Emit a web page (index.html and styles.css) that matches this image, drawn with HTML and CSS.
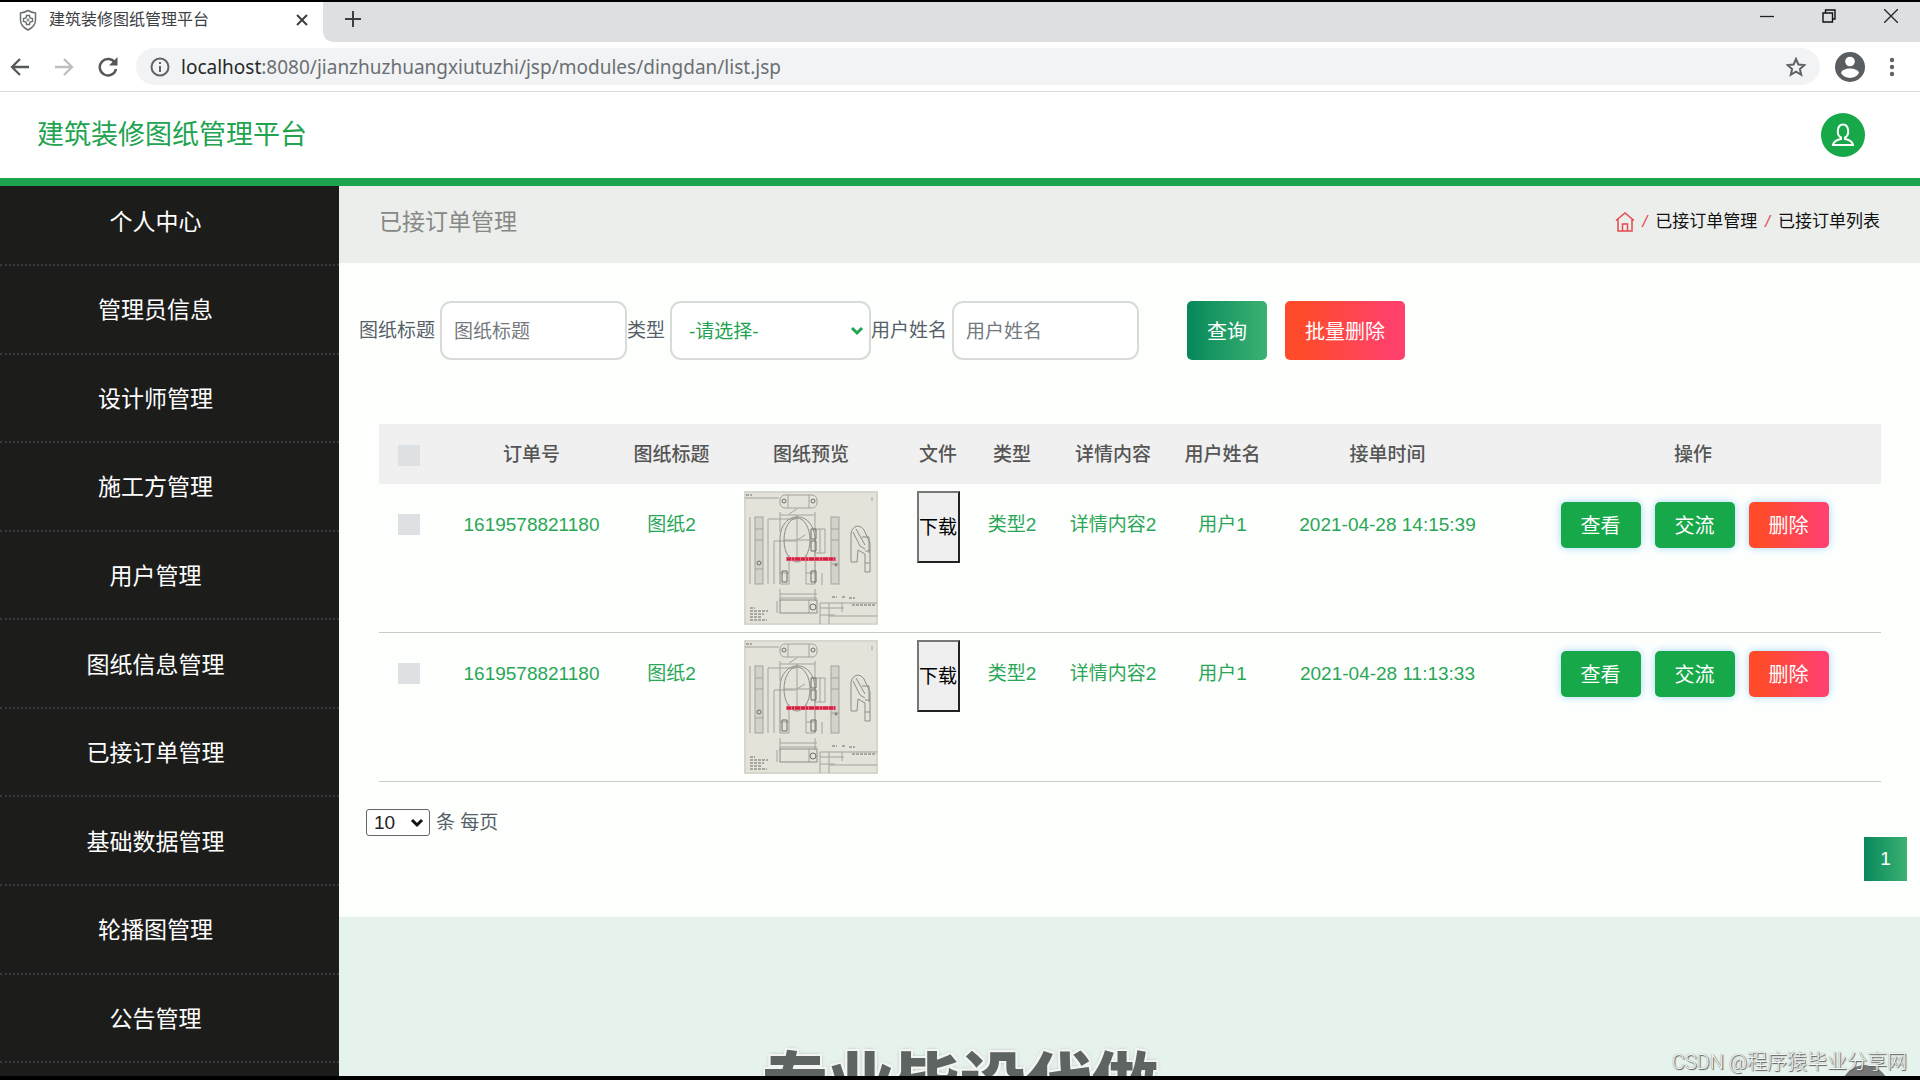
FILE: index.html
```html
<!DOCTYPE html>
<html lang="zh-CN">
<head>
    <meta charset="UTF-8">
    <meta name="viewport" content="width=device-width, initial-scale=1.0">
    <title>建筑装修图纸管理平台</title>
    <link rel="stylesheet" href="styles.css">
</head>
<body>
    <!-- shared drawing preview -->
    <svg class="defs" aria-hidden="true">
        <symbol id="drawing" viewBox="0 0 134 134">
            <rect width="134" height="134" fill="#e3e3da"/>
            <rect x="1" y="1" width="132" height="132" fill="none" stroke="#c9c9c1"/>
            <g fill="#d2d2ca">
                <rect x="11" y="26" width="8" height="67"/>
                <rect x="87" y="26" width="8" height="67"/>
            </g>
            <g fill="none" stroke="#a3a39c">
                <path d="M1 7h34M128 6v4"/>
                <rect x="36" y="4" width="37" height="13" rx="5"/>
                <path d="M44 4v13M65 4v13M53 18l-8 5M36 24h35M36 21v20M71 21v20M24 28h28M24 28v65M30 50v43M30 50h22"/>
                <rect x="11" y="26" width="8" height="67"/>
                <rect x="87" y="26" width="8" height="67"/>
                <path d="M11 38h8M11 49h8M87 38h8M87 49h8M6 26v67M11 78h8M87 73h8"/>
                <path d="M45 93V64M62 93V64M36 93h9M62 93h9M76 38v24M81 38v24M70 38h11M70 62h11"/>
                <path d="M40 49h27M53 24v42M53 49l8-5M36 82h9M62 82h9M36 98v12M71 98v12M36 103h37M36 107h37M78 82v12"/>
                <path d="M65 109v13M33 110v12M76 112v21M85 112v21M76 112h57M76 117h24M85 125h48M98 112v9M76 124h15"/>
            </g>
            <g fill="none" stroke="#8d8d87">
                <path d="M36 93V48c0-29 34-30 35 0v45"/>
                <ellipse cx="53" cy="49" rx="13" ry="22"/>
                <rect x="36" y="109" width="37" height="13"/>
                <path d="M107 68V42c2-8 9-9 13-3l6 13v29h-5V63l-7-4-1 12h-6zM109 41l7 14 5 3M112 38l9 16M121 60h5M121 72h5M118 46h7v16"/>
            </g>
            <g fill="none" stroke="#6d6d69">
                <circle cx="40" cy="10" r="2"/>
                <circle cx="69" cy="10" r="2"/>
                <circle cx="69" cy="116" r="3"/>
                <circle cx="15" cy="72" r="2"/>
                <circle cx="92" cy="74" r="1"/>
                <path d="M38 80h5v11h-5zM67 80h5v11h-5zM67 38h5v10h-5zM67 50h5v10h-5z"/>
                <path d="M2 4h6M6 117h5M6 120h18M6 123h14M6 126h12M6 129h17M88 106h5M98 106h4M105 107h6M108 114h23" stroke-dasharray="3 1"/>
            </g>
            <path d="M42 68h50" stroke="#e0708a" stroke-width="4"/>
            <path d="M43 68h48" stroke="#d4203c" stroke-width="3" stroke-dasharray="4 1 2 1 5 1"/>
        </symbol>
    </svg>

    <div class="browser">
        <div class="tab-strip">
            <div class="tab">
                <svg class="favicon" width="20" height="22" viewBox="0 0 20 22" fill="none" stroke="#6b6e70">
                    <path d="M10 1.500c3 1.800 5.500 2.300 7.500 2.500v7c0 5-3.500 8-7.500 10-4-2-7.500-5-7.500-10V4c2-.2 4.500-.7 7.500-2.500z" stroke-width="1.500"/>
                    <path d="M8.500 6.500h3L12 9l2.500.5v3L12 13l-.5 2.500h-3L8 13l-2.500-.5v-3L8 9z" stroke-width="1.400"/>
                    <circle cx="10" cy="11" r="1"/>
                </svg>
                <span class="tab-title">建筑装修图纸管理平台</span>
                <button class="icon-btn" aria-label="关闭标签页">
                    <svg width="12" height="12" viewBox="0 0 12 12" stroke="#3c4043" stroke-width="2"><path d="M1 1l10 10M11 1L1 11"/></svg>
                </button>
            </div>
            <div class="strip-rest">
                <button class="icon-btn" aria-label="新标签页">
                    <svg width="16" height="16" viewBox="0 0 16 16" stroke="#3c4043" stroke-width="2"><path d="M8 0v16M0 8h16"/></svg>
                </button>
                <div class="window-btns">
                    <button class="icon-btn" aria-label="最小化">
                        <svg width="14" height="14" viewBox="0 0 14 14" stroke="#222" stroke-width="1.300"><path d="M0 7.500h14"/></svg>
                    </button>
                    <button class="icon-btn" aria-label="还原">
                        <svg width="14" height="14" viewBox="0 0 14 14" fill="none" stroke="#111" stroke-width="1.400"><path d="M1 4h9.500v9H1zM3.500 4V1H13v9h-2.500"/></svg>
                    </button>
                    <button class="icon-btn" aria-label="关闭">
                        <svg width="14" height="14" viewBox="0 0 14 14" stroke="#222" stroke-width="1.300"><path d="M0 0l14 14M14 0L0 14"/></svg>
                    </button>
                </div>
            </div>
        </div>
        <div class="toolbar">
            <button class="icon-btn" aria-label="后退">
                <svg width="20" height="20" viewBox="0 0 20 20" fill="none" stroke="#55585b" stroke-width="2.300"><path d="M19 10H2M10 2l-8 8 8 8"/></svg>
            </button>
            <button class="icon-btn" aria-label="前进">
                <svg width="20" height="20" viewBox="0 0 20 20" fill="none" stroke="#bcbec0" stroke-width="2.300"><path d="M1 10h17M10 2l8 8-8 8"/></svg>
            </button>
            <button class="icon-btn" aria-label="刷新">
                <svg width="20" height="20" viewBox="0 0 20 20"><path d="M17 6A8.200 8.200 0 1 0 18 12" fill="none" stroke="#55585b" stroke-width="2.500"/><path d="M19.500 0v8.500H11z" fill="#55585b"/></svg>
            </button>
            <div class="url-bar">
                <svg width="20" height="20" viewBox="0 0 20 20" fill="none" stroke="#5f6368" stroke-width="2"><circle cx="10" cy="10" r="8.500"/><path d="M10 9v6M10 5v2"/></svg>
                <span class="url"><b>localhost</b>:8080/jianzhuzhuangxiutuzhi/jsp/modules/dingdan/list.jsp</span>
                <button class="icon-btn" aria-label="收藏">
                    <svg width="20" height="20" viewBox="0 0 20 20" fill="none" stroke="#5f6368" stroke-width="2"><path d="M10 2l2.400 5.500 6 .5-4.500 4 1.300 5.800L10 14.700l-5.200 3.100L6.100 12 1.600 8l6-.5z"/></svg>
                </button>
            </div>
            <button class="icon-btn" aria-label="个人资料">
                <svg width="30" height="30" viewBox="0 0 30 30"><circle cx="15" cy="15" r="15" fill="#5b5e61"/><circle cx="15" cy="9.500" r="4.800" fill="#fff"/><path d="M6 21c1-6 17-6 18 0-4 6.500-14 6.500-18 0z" fill="#fff"/></svg>
            </button>
            <button class="icon-btn menu-btn" aria-label="菜单">
                <svg width="6" height="20" viewBox="0 0 6 20" fill="#5f6368"><circle cx="3" cy="3" r="2.200"/><circle cx="3" cy="10" r="2.200"/><circle cx="3" cy="17" r="2.200"/></svg>
            </button>
        </div>
    </div>

    <header class="site-header">
        <a class="brand" href="#">建筑装修图纸管理平台</a>
        <button class="user-btn" aria-label="用户">
            <svg width="24" height="24" viewBox="0 0 24 24" fill="none" stroke="#fff" stroke-width="2"><path d="M10 14.500C5 12 6 1.500 12 1.500s7 10.500 2 13v1.500c4 .8 7.500 2.500 8 6H2c.5-3.500 4-5.200 8-6z"/></svg>
        </button>
    </header>

    <div class="layout">
        <nav class="sidebar">
            <a href="#">个人中心</a>
            <a href="#">管理员信息</a>
            <a href="#">设计师管理</a>
            <a href="#">施工方管理</a>
            <a href="#">用户管理</a>
            <a href="#">图纸信息管理</a>
            <a href="#">已接订单管理</a>
            <a href="#">基础数据管理</a>
            <a href="#">轮播图管理</a>
            <a href="#">公告管理</a>
        </nav>

        <main class="main">
            <div class="banner">
                <h1>已接订单管理</h1>
                <div class="breadcrumb">
                    <svg width="20" height="20" viewBox="0 0 20 20" fill="none" stroke="#e5484d" stroke-width="1.500"><path d="M1 8.500L10 1l9 7.500M3 7v12h14V7M7.500 19v-7h5v7"/></svg>
                    <i>/</i>
                    <a href="#">已接订单管理</a>
                    <i>/</i>
                    <a href="#">已接订单列表</a>
                </div>
            </div>

            <div class="content">
                <form class="search-form">
                    <label for="title">图纸标题</label>
                    <input type="text" id="title" placeholder="图纸标题">
                    <label for="type">类型</label>
                    <select id="type">
                        <option>-请选择-</option>
                    </select>
                    <label for="username">用户姓名</label>
                    <input type="text" id="username" placeholder="用户姓名">
                    <div class="form-btns">
                        <button type="button" class="btn btn-search">查询</button>
                        <button type="button" class="btn btn-danger">批量删除</button>
                    </div>
                </form>

                <table class="orders">
                    <colgroup>
                        <col class="c-check"><col class="c-no"><col class="c-name"><col class="c-preview"><col class="c-file">
                        <col class="c-type"><col class="c-detail"><col class="c-name"><col class="c-time"><col class="c-action">
                    </colgroup>
                    <thead>
                        <tr>
                            <th><input type="checkbox" aria-label="全选"></th>
                            <th>订单号</th>
                            <th>图纸标题</th>
                            <th>图纸预览</th>
                            <th>文件</th>
                            <th>类型</th>
                            <th>详情内容</th>
                            <th>用户姓名</th>
                            <th>接单时间</th>
                            <th>操作</th>
                        </tr>
                    </thead>
                    <tbody>
                        <tr>
                            <td><input type="checkbox" aria-label="选择"></td>
                            <td>1619578821180</td>
                            <td>图纸2</td>
                            <td class="media"><svg class="preview"><use href="#drawing"/></svg></td>
                            <td class="media"><button class="download">下载</button></td>
                            <td>类型2</td>
                            <td>详情内容2</td>
                            <td>用户1</td>
                            <td>2021-04-28 14:15:39</td>
                            <td class="actions">
                                <div class="action-btns">
                                    <button class="btn btn-view">查看</button>
                                    <button class="btn btn-view">交流</button>
                                    <button class="btn btn-danger">删除</button>
                                </div>
                            </td>
                        </tr>
                        <tr>
                            <td><input type="checkbox" aria-label="选择"></td>
                            <td>1619578821180</td>
                            <td>图纸2</td>
                            <td class="media"><svg class="preview"><use href="#drawing"/></svg></td>
                            <td class="media"><button class="download">下载</button></td>
                            <td>类型2</td>
                            <td>详情内容2</td>
                            <td>用户1</td>
                            <td>2021-04-28 11:13:33</td>
                            <td class="actions">
                                <div class="action-btns">
                                    <button class="btn btn-view">查看</button>
                                    <button class="btn btn-view">交流</button>
                                    <button class="btn btn-danger">删除</button>
                                </div>
                            </td>
                        </tr>
                    </tbody>
                </table>

                <div class="table-footer">
                    <div class="page-size">
                        <select id="pageSize">
                            <option>10</option>
                        </select>
                        <label for="pageSize">条 每页</label>
                    </div>
                    <a class="page-link" href="#">1</a>
                </div>
            </div>
        </main>
    </div>

    <div class="overlay">
        <div class="slogan">专业毕设代做</div>
        <div class="bubble"></div>
        <div class="credit">CSDN @程序猿毕业分享网</div>
    </div>
</body>
</html>
```

FILE: styles.css
```css
* {
    margin: 0;
    padding: 0;
    box-sizing: border-box;
}

body {
    height: 100vh;
    display: flex;
    flex-direction: column;
    padding: 2px 0 4px;
    overflow: hidden;
    position: relative;
    background: #000;
    font-family: "Liberation Sans", "Noto Sans CJK SC", sans-serif;
    font-size: 19px;
    line-height: 28px;
    color: #56606a;
}

a {
    color: inherit;
    text-decoration: none;
}

button, input, select {
    font: inherit;
}

svg {
    display: block;
    flex: none;
}

.defs {
    position: absolute;
    width: 0;
    height: 0;
}

.icon-btn {
    border: none;
    background: none;
    cursor: pointer;
}

/* browser window */
.browser {
    background: #fff;
    border-bottom: 1px solid #d9dbdc;
}

.tab-strip {
    display: flex;
    height: 40px;
}

.tab {
    width: 323px;
    display: flex;
    align-items: center;
    padding: 0 15px 4px 18px;
}

.tab-title {
    flex: 1;
    margin-left: 11px;
    font-size: 16px;
    color: #3c4043;
}

.strip-rest {
    flex: 1;
    display: flex;
    justify-content: space-between;
    align-items: center;
    padding: 0 22px 6px;
    background: #dde0e3;
    border-bottom-left-radius: 10px;
}

.window-btns {
    display: flex;
    gap: 48px;
    padding-bottom: 6px;
}

.toolbar {
    display: flex;
    align-items: center;
    height: 49px;
    padding: 0 25px 0 10px;
}

.toolbar .icon-btn + .icon-btn {
    margin-left: 24px;
}

.url-bar {
    flex: 1;
    display: flex;
    align-items: center;
    height: 37px;
    margin: 0 15px 0 18px;
    padding: 0 14px;
    border-radius: 19px;
    background: #f1f3f4;
}

.url {
    flex: 1;
    margin-left: 11px;
    font-family: "Noto Sans", "Open Sans", sans-serif;
    font-size: 19px;
    color: #6b6f73;
}

.url b {
    font-weight: 400;
    color: #27292b;
}

/* site header */
.site-header {
    display: flex;
    align-items: center;
    justify-content: space-between;
    height: 94px;
    padding: 0 55px 0 37px;
    background: #fff;
    border-bottom: 8px solid #1ea44e;
}

.brand {
    font-size: 27px;
    color: #21a34f;
}

.user-btn {
    width: 44px;
    height: 44px;
    display: flex;
    align-items: center;
    justify-content: center;
    border: none;
    border-radius: 50%;
    background: #16a849;
}

.layout {
    flex: 1;
    display: flex;
    min-height: 0;
    background: #e6f3ec;
}

/* sidebar */
.sidebar {
    width: 339px;
    display: flex;
    flex-direction: column;
    padding-bottom: 13px;
    background: #1c1d1b;
}

.sidebar a {
    flex: 1;
    display: flex;
    align-items: center;
    justify-content: center;
    padding: 2px 28px 0 0;
    border-bottom: 2px dotted #363a3d;
    font-size: 23px;
    color: #fff;
}

.sidebar a:first-child {
    flex: none;
    height: 80px;
    padding: 0 28px 6px 0;
}

/* main */
.main {
    flex: 1;
    min-width: 0;
}

.banner {
    display: flex;
    align-items: center;
    justify-content: space-between;
    height: 77px;
    padding: 0 40px 6px 40px;
    background: #eceeec;
}

.banner h1 {
    font-size: 23px;
    font-weight: 400;
    color: #868886;
}

.breadcrumb {
    display: flex;
    align-items: center;
    gap: 8px;
    font-size: 17px;
    color: #111;
}

.breadcrumb i {
    color: #e5484d;
}

.content {
    padding: 38px 0 36px;
    background: #fdfffd;
}

.search-form {
    display: flex;
    align-items: center;
    margin-bottom: 64px;
    padding-left: 20px;
}

.search-form label {
    margin-right: 5px;
}

.search-form input,
.search-form select {
    width: 187px;
    height: 59px;
    padding: 2px 12px 0;
    border: 2px solid #d9dbda;
    border-radius: 11px;
    background: #fff;
    outline: none;
}

.search-form input::placeholder {
    color: #74797e;
}

.search-form select {
    appearance: none;
    width: 201px;
    padding: 2px 30px 0 17px;
    color: #21a34f;
    background: #fff url("data:image/svg+xml,%3Csvg xmlns='http://www.w3.org/2000/svg' width='14' height='10' fill='none' stroke='%2321a34f' stroke-width='3'%3E%3Cpath d='M2 2l5 5 5-5'/%3E%3C/svg%3E") no-repeat right 5px center;
}

.form-btns {
    display: flex;
    gap: 18px;
    margin-left: 48px;
}

.btn {
    border: none;
    border-radius: 5px;
    font-size: 20px;
    color: #fff;
    cursor: pointer;
}

.form-btns .btn {
    height: 59px;
    padding: 2px 20px 0;
}

.btn-search {
    background: linear-gradient(to right, #07885a, #3bb172);
}

.btn-view {
    background: #16a849;
}

.btn-danger {
    background: linear-gradient(to right, #ff4b2b 15%, #ff416c 90%);
}

/* orders table */
.orders {
    width: calc(100% - 79px);
    margin: 0 39px 0 40px;
    table-layout: fixed;
    border-collapse: collapse;
    text-align: center;
}

.c-check { width: 60px; }
.c-no { width: 185px; }
.c-name { width: 95px; }
.c-preview { width: 184px; }
.c-file { width: 70px; }
.c-type { width: 78px; }
.c-detail { width: 124px; }
.c-time { width: 235px; }
.c-action { width: 376px; }

.orders th {
    height: 60px;
    padding-top: 2px;
    background: #eff0ef;
    font-weight: 500;
    color: #555;
}

.orders td {
    padding-top: 27px;
    border-bottom: 1px solid #c9cbca;
    vertical-align: top;
    color: #2aa657;
}

.orders td.media {
    padding: 7px 0;
}

.orders td.actions {
    padding: 18px 0 0 3px;
}

.orders input {
    appearance: none;
    display: block;
    width: 22px;
    height: 21px;
    margin: 0 auto;
    background: #dee1e4;
}

.orders td input {
    margin-top: 3px;
}

.preview {
    width: 134px;
    height: 134px;
    margin: 0 auto;
}

.download {
    width: 43px;
    height: 72px;
    padding-top: 2px;
    border: 2px solid;
    border-color: #767876 #222 #222 #767876;
    background: #efefef;
    color: #000;
}

.action-btns {
    display: flex;
    justify-content: center;
    gap: 14px;
}

.action-btns .btn {
    height: 46px;
    padding: 2px 20px 0;
    box-shadow: 0 0 8px #a6d6f5;
}

.table-footer {
    display: flex;
    justify-content: space-between;
    padding: 27px 13px 0 27px;
}

.page-size {
    display: flex;
    align-items: center;
    gap: 6px;
    height: 27px;
}

.page-size select {
    appearance: none;
    width: 64px;
    height: 27px;
    padding-left: 7px;
    line-height: 25px;
    border: 1px solid #666;
    border-radius: 3px;
    color: #222;
    background: #fff url("data:image/svg+xml,%3Csvg xmlns='http://www.w3.org/2000/svg' width='14' height='10' fill='none' stroke='%23111' stroke-width='3'%3E%3Cpath d='M2 2l5 5 5-5'/%3E%3C/svg%3E") no-repeat right 5px center;
}

.page-link {
    width: 43px;
    margin-top: 28px;
    line-height: 44px;
    text-align: center;
    color: #fff;
    background: linear-gradient(to right, #07885a, #3bb172);
}

/* floating captions, clipped by the bottom edge */
.overlay {
    position: absolute;
    left: 0;
    right: 0;
    bottom: 4px;
    height: 80px;
    overflow: hidden;
    pointer-events: none;
}

.slogan {
    position: absolute;
    top: 52px;
    left: 0;
    right: 0;
    text-align: center;
    font-size: 66px;
    line-height: 72px;
    font-weight: 900;
    color: #5e6461;
    text-shadow: 2px 0 #f3f5f3, -2px 0 #f3f5f3, 0 2px #f3f5f3, 0 -2px #f3f5f3, 2px 2px #f3f5f3, -2px -2px #f3f5f3, 2px -2px #f3f5f3, -2px 2px #f3f5f3, 0 0 4px #5e6461;
}

.bubble {
    position: absolute;
    right: 31px;
    top: 69px;
    width: 48px;
    height: 48px;
    border-radius: 50%;
    background: #747775;
}

.credit {
    position: absolute;
    right: 13px;
    bottom: 0;
    font-family: Roboto, "Noto Sans CJK SC", sans-serif;
    font-size: 20px;
    font-weight: 300;
    color: #f4f6f5;
    text-shadow: 1px 1px 1px #555, 0 0 1px #777;
}
```
